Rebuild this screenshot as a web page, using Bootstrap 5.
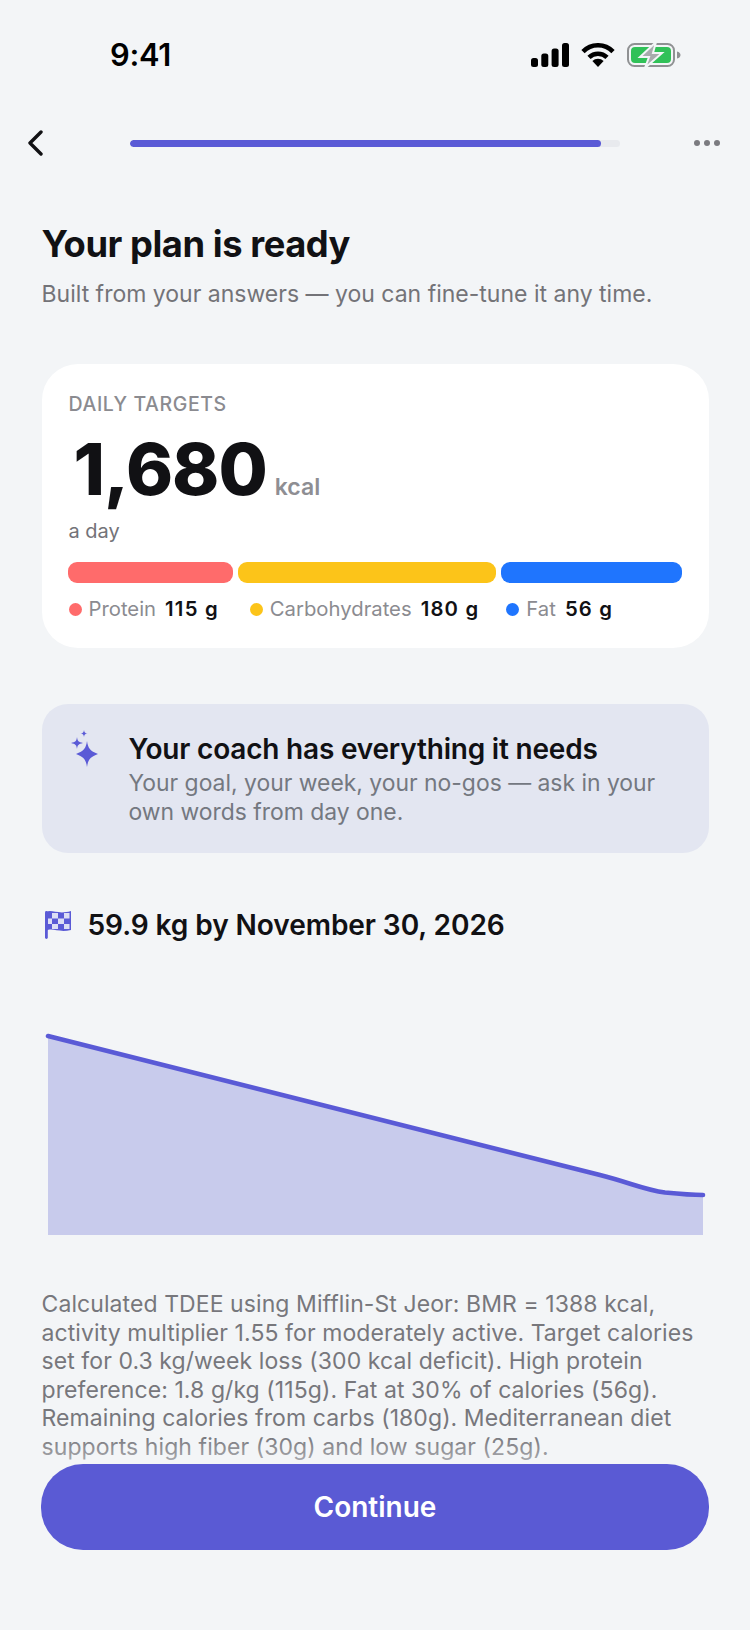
<!DOCTYPE html>
<html lang="en">
<head>
    <meta charset="UTF-8">
    <meta name="viewport" content="width=device-width, initial-scale=1.0">
    <title>Your plan is ready</title>
    <link href="https://cdn.jsdelivr.net/npm/bootstrap@5.3.0/dist/css/bootstrap.min.css" rel="stylesheet">
    <script src="https://cdn.jsdelivr.net/npm/bootstrap@5.3.0/dist/js/bootstrap.bundle.min.js"></script>
    <style>
        html, body { height: 100%; }
        body {
            background: #f3f5f7;
            font-family: "Inter", "Liberation Sans", sans-serif;
            color: #111114;
            overflow: hidden;
        }
        .screen { position: relative; width: 750px; height: 1630px; overflow: hidden; }
        .status-row { height: 36px; margin-top: 37px; padding: 0 69px 0 110px; }
        .status-time { font-size: 30.8px; font-weight: 600; line-height: 36px; letter-spacing: -0.3px; color: #000; }
        .top-row { height: 40px; margin-top: 50px; padding: 0 30px 0 27px; }
        .back-icon { width: 16px; height: 26px; flex: none; }
        .plan-progress { width: 490px; height: 7px; margin-left: 87px; background: #e8eaee; border-radius: 4px; }
        .plan-progress .progress-bar { background: #5a5ad6; border-radius: 4px; }
        .dot-row { gap: 4px; }
        .dot-row span { width: 6px; height: 6px; border-radius: 50%; background: #7b7b80; }
        .content-wrap { padding: 0 41.5px; }
        .plan-title { font-size: 36.3px; font-weight: 700; line-height: 44px; letter-spacing: -0.45px; margin: 0; padding-top: 59px; }
        .plan-sub { font-size: 23px; line-height: 30px; color: #737378; margin: 13px 0 0; }
        .targets-card { height: 284px; margin-top: 55px; padding: 29px 27px 0; border: 0; border-radius: 36px; background: #fff; }
        .targets-label { font-size: 19.5px; font-weight: 500; line-height: 22px; color: #8b8b90; letter-spacing: 0.6px; }
        .kcal-num { font-size: 71.3px; font-weight: 800; line-height: 72px; letter-spacing: -1px; margin-left: 5px; color: #111114; }
        .kcal-unit { font-size: 23px; font-weight: 600; color: #8e8e93; margin-left: 8px; }
        .kcal-row { margin-top: 18px; }
        .a-day { font-size: 20px; line-height: 24px; color: #737378; margin-top: 14px; }
        .macro-bar { gap: 5px; margin-top: 19px; margin-left: -1px; margin-right: -1px; }
        .macro-seg { height: 21px; border-radius: 9px; }
        .macro-legend { margin-top: 13px; font-size: 20.3px; line-height: 26px; }
        .legend-dot { width: 13px; height: 13px; border-radius: 50%; margin-right: 7px; }
        .legend-name { color: #8b8b90; margin-right: 9px; }
        .legend-val { font-weight: 600; color: #111114; letter-spacing: 1.2px; }
        .coach-box { height: 149px; margin-top: 56px; padding: 28px 26px 0 28px; border-radius: 26px; background: #e3e6f1; }
        .coach-icon { width: 30px; height: 38px; flex: none; margin: -2px 29px 0 0; }
        .coach-title { font-size: 28px; font-weight: 600; line-height: 34px; letter-spacing: -0.2px; color: #111114; margin-bottom: 3px; }
        .coach-sub { font-size: 22.9px; line-height: 29px; color: #747880; }
        .goal-row { margin-top: 56px; height: 32px; }
        .flag-icon { width: 30px; height: 30px; flex: none; margin: 0 15px 0 1px; }
        .goal-text { font-size: 28.1px; font-weight: 600; line-height: 32px; letter-spacing: -0.1px; }
        .chart-svg { display: block; width: 750px; height: 240px; margin: 61px 0 0 -41.5px; }
        .calc-note { font-size: 23px; line-height: 28.6px; letter-spacing: 0.08px; color: #77777c; margin: 48px 0 0; }
        .bottom-bar { position: absolute; left: 0; right: 0; top: 1424px; height: 206px; padding: 40px 41px 0; background: linear-gradient(to bottom, rgba(243,245,247,0) 12px, rgba(243,245,247,.45) 40px); }
        .bottom-fill { position: absolute; left: 0; right: 0; top: 40px; bottom: 0; background: #f3f5f7; }
        .continue-btn { position: relative; display: block; width: 668px; height: 86px; border: 0; border-radius: 42px; background: #5a5ad4; color: #fff; font-size: 28px; font-weight: 600; }
    </style>
</head>
<body>
    <div class="screen">
        <div class="status-row d-flex align-items-center justify-content-between">
            <div class="status-time">9:41</div>
            <div class="d-flex align-items-center gap-2">
                <svg width="38" height="24" viewBox="0 0 38 24" class="d-block me-1">
                    <rect x="0" y="15" width="7" height="9" rx="2.5"/>
                    <rect x="10.3" y="10.5" width="7" height="13.5" rx="2.5"/>
                    <rect x="20.6" y="5.5" width="7" height="18.5" rx="2.5"/>
                    <rect x="31" y="0" width="7" height="24" rx="2.5"/>
                </svg>
                <svg width="34" height="24" viewBox="0 0 34 24" class="d-block me-1">
                    <path d="M2 8.6 A21 21 0 0 1 32 8.6" fill="none" stroke="#000" stroke-width="4.6"/>
                    <path d="M8 14.4 A13 13 0 0 1 26 14.4" fill="none" stroke="#000" stroke-width="4.6"/>
                    <path d="M11.4 18 A8 8 0 0 1 22.6 18 L17 24 Z"/>
                </svg>
                <svg width="54" height="24" viewBox="0 0 54 24" class="d-block">
                    <rect x="1" y="1" width="46" height="22" rx="6.5" fill="none" stroke="#8f9193" stroke-width="2"/>
                    <rect x="4" y="4" width="40" height="16" rx="4" fill="#30c158"/>
                    <path d="M50 8.5 C52.5 9 53.5 10.5 53.5 12 C53.5 13.5 52.5 15 50 15.5 Z" fill="#8f9193"/>
                    <path d="M29 -1 L13 14 H22 L18 25 L35 10 H26 Z" fill="#a8abad" stroke="#f3f5f7" stroke-width="2"/>
                </svg>
            </div>
        </div>

        <div class="top-row d-flex align-items-center">
            <svg class="back-icon d-block" viewBox="0 0 16 26">
                <path d="M14 2 L3 13 L14 24" fill="none" stroke="#111114" stroke-width="3.4" stroke-linecap="round" stroke-linejoin="round"/>
            </svg>
            <div class="progress plan-progress">
                <div class="progress-bar" style="width: 96.2%"></div>
            </div>
            <div class="dot-row d-flex ms-auto">
                <span></span><span></span><span></span>
            </div>
        </div>

        <div class="content-wrap">
            <h1 class="plan-title">Your plan is ready</h1>
            <p class="plan-sub">Built from your answers — you can fine-tune it any time.</p>

            <div class="card targets-card">
                <div class="targets-label">DAILY TARGETS</div>
                <div class="kcal-row d-flex align-items-baseline">
                    <span class="kcal-num">1,680</span>
                    <span class="kcal-unit">kcal</span>
                </div>
                <div class="a-day">a day</div>
                <div class="macro-bar d-flex">
                    <div class="macro-seg" style="width:165px;background:#ff6b6b"></div>
                    <div class="macro-seg" style="width:258px;background:#fcc419"></div>
                    <div class="macro-seg" style="width:181px;background:#1f75fe"></div>
                </div>
                <div class="macro-legend d-flex align-items-center">
                    <span class="legend-dot" style="background:#ff6b6b"></span>
                    <span class="legend-name">Protein</span>
                    <span class="legend-val" style="margin-right:31px">115 g</span>
                    <span class="legend-dot" style="background:#fcc419"></span>
                    <span class="legend-name">Carbohydrates</span>
                    <span class="legend-val" style="margin-right:27px">180 g</span>
                    <span class="legend-dot" style="background:#1f75fe"></span>
                    <span class="legend-name">Fat</span>
                    <span class="legend-val">56 g</span>
                </div>
            </div>

            <div class="coach-box d-flex">
                <svg class="coach-icon" viewBox="0 0 30 38" fill="#5a5ad6">
                    <path d="M17 11 C18 18 20 21 28 24 C20 27 18 30 17 37 C16 30 14 27 6 24 C14 21 16 18 17 11 Z"/>
                    <path d="M7 7 C7.5 11 8.5 12 13 13 C8.5 14 7.5 15 7 19 C6.5 15 5.5 14 1 13 C5.5 12 6.5 11 7 7 Z"/>
                    <path d="M14 0 C14.3 2.5 15 3.2 17.5 3.5 C15 3.8 14.3 4.5 14 7 C13.7 4.5 13 3.8 10.5 3.5 C13 3.2 13.7 2.5 14 0 Z"/>
                </svg>
                <div>
                    <div class="coach-title">Your coach has everything it needs</div>
                    <div class="coach-sub">Your goal, your week, your no-gos — ask in your own words from day one.</div>
                </div>
            </div>

            <div class="goal-row d-flex align-items-center">
                <svg class="flag-icon" viewBox="0 0 30 30">
                    <defs>
                        <clipPath id="flagShape"><path d="M3 2 C9 -1 15 5 28 1 V20 C15 23 9 17 3 21 Z"/></clipPath>
                    </defs>
                    <rect x="2" y="1" width="2.8" height="28" rx="1.4" fill="#5a5ad6"/>
                    <g clip-path="url(#flagShape)">
                        <rect width="30" height="24" fill="#5a5ad6"/>
                        <g fill="#dcdef5">
                            <rect x="9" y="3" width="6" height="5.5"/><rect x="21" y="3" width="5.5" height="5.5"/>
                            <rect x="5" y="8.5" width="4" height="5.5"/><rect x="15" y="8.5" width="6" height="5.5"/>
                            <rect x="9" y="14" width="6" height="5"/><rect x="21" y="14" width="5.5" height="5"/>
                        </g>
                    </g>
                </svg>
                <div class="goal-text">59.9 kg by November 30, 2026</div>
            </div>

            <svg class="chart-svg" viewBox="0 0 750 240">
                <path d="M48 34 L600 173 C630 180.6 645 188 665 190.5 C680 192 692 193 703 193 V233 H48 Z" fill="#c8cbec"/>
                <path d="M48 34 L600 173 C630 180.6 645 188 665 190.5 C680 192 692 193 703 193" fill="none" stroke="#5a5ad6" stroke-width="4.6" stroke-linecap="round"/>
            </svg>

            <p class="calc-note">Calculated TDEE using Mifflin-St Jeor: BMR = 1388 kcal, activity multiplier 1.55 for moderately active. Target calories set for 0.3 kg/week loss (300 kcal deficit). High protein preference: 1.8 g/kg (115g). Fat at 30% of calories (56g). Remaining calories from carbs (180g). Mediterranean diet supports high fiber (30g) and low sugar (25g).</p>
        </div>

        <div class="bottom-bar">
            <div class="bottom-fill"></div>
            <button type="button" class="btn continue-btn">Continue</button>
        </div>
    </div>
</body>
</html>
